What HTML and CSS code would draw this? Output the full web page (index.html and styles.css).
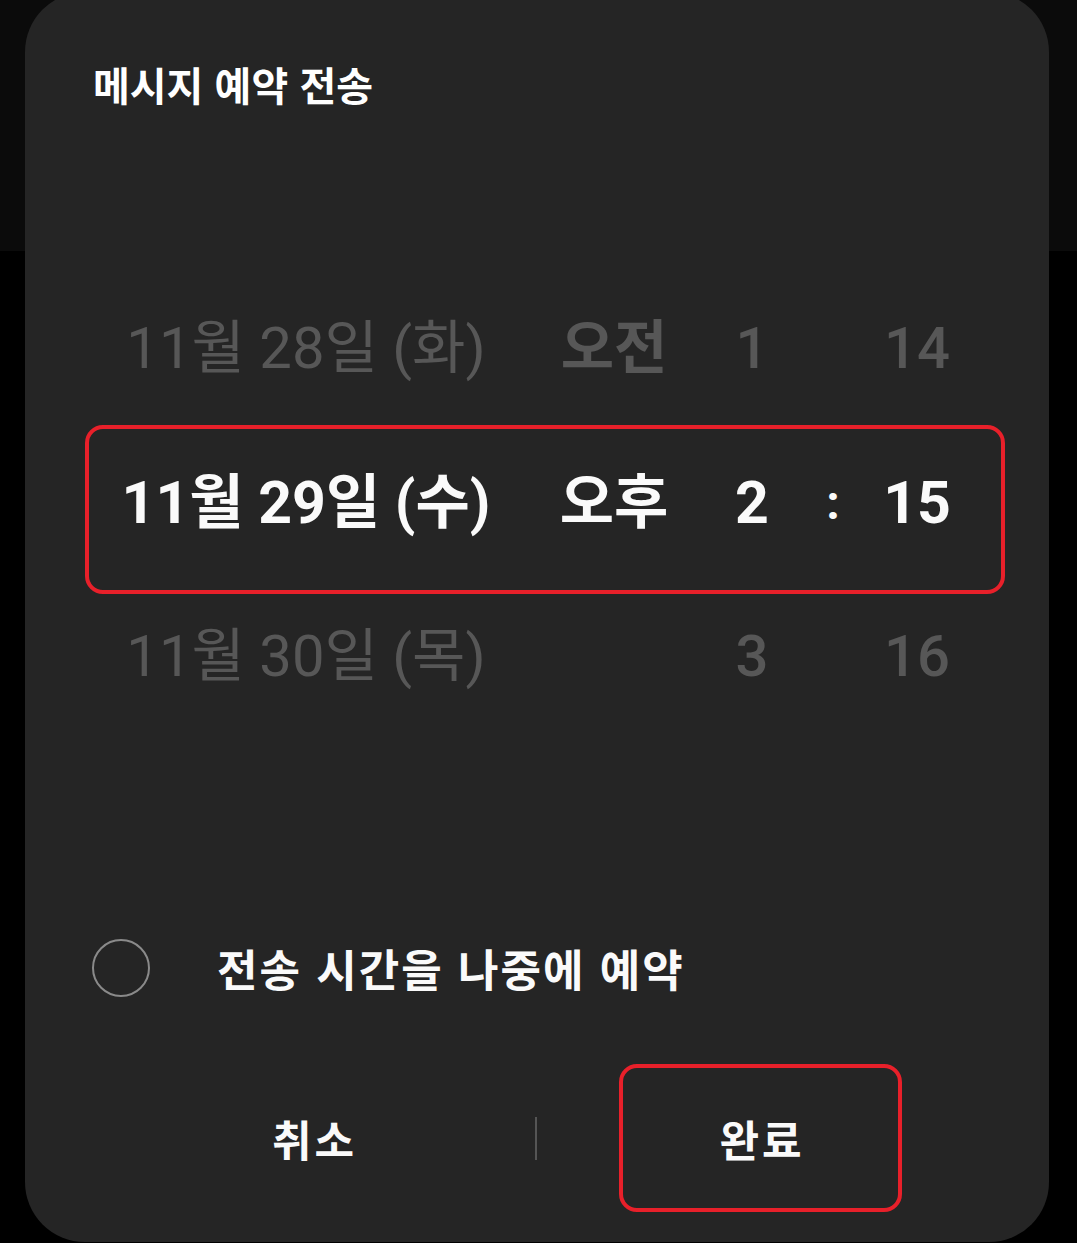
FILE: index.html
```html
<!DOCTYPE html>
<html lang="ko">
<head>
    <meta charset="UTF-8">
    <meta name="viewport" content="width=device-width, initial-scale=1.0">
    <title>메시지 예약 전송</title>
    <link rel="stylesheet" href="styles.css">
</head>
<body>

    <div class="dialog">
        <h1 class="title">메시지 예약 전송</h1>

        <div class="picker">
            <div class="row dim">
                <span class="col date">11월 28일 (화)</span>
                <span class="col ampm">오전</span>
                <span class="col num">1</span>
                <span class="col colon"></span>
                <span class="col num">14</span>
            </div>
            <div class="row selected">
                <span class="col date">11월 29일 (수)</span>
                <span class="col ampm">오후</span>
                <span class="col num">2</span>
                <span class="col colon">:</span>
                <span class="col num">15</span>
            </div>
            <div class="row dim last">
                <span class="col date">11월 30일 (목)</span>
                <span class="col ampm"></span>
                <span class="col num">3</span>
                <span class="col colon"></span>
                <span class="col num">16</span>
            </div>
        </div>

        <label class="later">
            <span class="radio"></span>
            <span class="later-text">전송 시간을 나중에 예약</span>
        </label>

        <div class="actions">
            <button class="btn">취소</button>
            <span class="divider"></span>
            <button class="btn"><span class="mark">완료</span></button>
        </div>
    </div>

</body>
</html>
```

FILE: styles.css
```css
html, body {
    margin: 0;
    padding: 0;
}
body {
    width: 1077px;
    height: 1243px;
    overflow: hidden;
    background: linear-gradient(#0b0b0b 0, #0b0b0b 251px, #000 251px);
    font-family: Roboto, "Noto Sans CJK KR", sans-serif;
    color: #fafafa;
}
.dialog {
    margin: -8px 0 0 25px;
    width: 1024px;
    height: 1250px;
    box-sizing: border-box;
    background: #252525;
    border-radius: 60px;
    display: flex;
    flex-direction: column;
}
.title {
    margin: 0;
    padding: 69px 0 0 68px;
    font-family: "Noto Sans CJK KR", sans-serif;
    font-size: 40px;
    line-height: 46px;
    font-weight: 700;
    color: #fff;
}
.picker {
    margin: 164px 0 0 60px;
    width: 920px;
}
.row {
    display: grid;
    grid-template-columns: 442px 174px 102px 60px 108px 34px;
    align-items: center;
    height: 154px;
    font-size: 58px;
    line-height: 58px;
}
.col {
    text-align: center;
    white-space: nowrap;
}
.dim {
    color: #575757;
}
.dim .date {
    font-weight: 400;
}
.dim .ampm {
    font-weight: 700;
}
.dim .num {
    font-weight: 500;
}
.row.last {
    height: 124px;
}
.selected {
    height: 169px;
    box-sizing: border-box;
    border: 4px solid #e8202a;
    border-radius: 18px;
    padding-bottom: 13px;
    font-size: 59px;
    font-weight: 700;
    color: #fafafa;
    grid-template-columns: 434px 182px 94px 68px 100px 34px;
}
.selected .colon {
    font-size: 48px;
}
.later {
    margin: 210px 0 0 67px;
    height: 80px;
    display: flex;
    align-items: center;
}
.radio {
    width: 58px;
    height: 58px;
    box-sizing: border-box;
    border: 2px solid #8a8a8a;
    border-radius: 50%;
    flex: none;
}
.later-text {
    margin-left: 67px;
    font-family: "Noto Sans CJK KR", sans-serif;
    font-size: 44px;
    letter-spacing: 2px;
    font-weight: 700;
    color: #fafafa;
}
.actions {
    margin: 56px 0 0 69px;
    width: 884px;
    height: 148px;
    display: flex;
    align-items: center;
}
.btn {
    flex: 1;
    height: 148px;
    background: none;
    border: none;
    padding: 0;
    font-family: "Noto Sans CJK KR", sans-serif;
    font-size: 43px;
    letter-spacing: 3px;
    font-weight: 700;
    color: #fafafa;
    display: flex;
    align-items: center;
    justify-content: center;
}
.divider {
    width: 2px;
    height: 43px;
    background: #555;
    flex: none;
}
.mark {
    width: 283px;
    height: 148px;
    box-sizing: border-box;
    border: 4px solid #e8202a;
    border-radius: 18px;
    display: flex;
    align-items: center;
    justify-content: center;
    margin-left: 6px;
    padding-left: 3px;
}
```
